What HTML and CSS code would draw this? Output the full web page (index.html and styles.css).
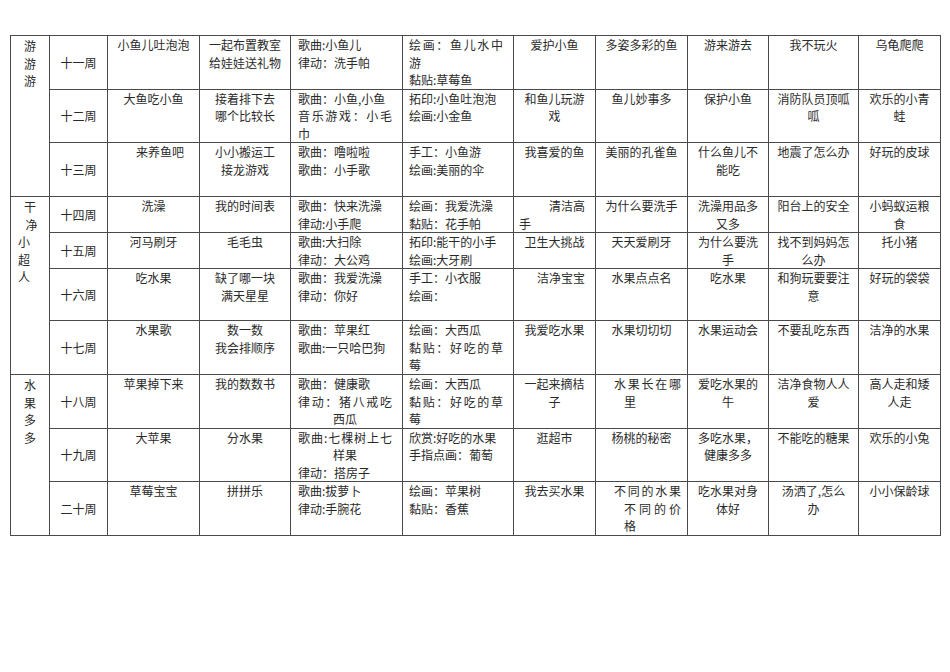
FILE: index.html
```html
<!DOCTYPE html>
<html lang="zh-CN">
<head>
<meta charset="utf-8">
<title>主题活动安排</title>
<link rel="stylesheet" href="styles.css">
</head>
<body>
<div class="page">
<table class="plan">
  <colgroup>
    <col class="w-theme"><col class="w-week"><col class="w-c3"><col class="w-c4"><col class="w-c5"><col class="w-c6">
    <col class="w-c7"><col class="w-c8"><col class="w-c9"><col class="w-c10"><col class="w-c11">
  </colgroup>
  <tbody>
    <tr class="r1">
      <td class="theme" rowspan="3">游<br>游<br>游</td>
      <td class="week">十一周</td>
      <td>小鱼儿吐泡泡</td>
      <td>一起布置教室<br>给娃娃送礼物</td>
      <td class="lt"><div>歌曲:小鱼儿</div><div>律动：洗手帕</div></td>
      <td class="lt c6"><div>绘画：鱼儿水中游</div><div>黏贴:草莓鱼</div></td>
      <td>爱护小鱼</td>
      <td>多姿多彩的鱼</td>
      <td>游来游去</td>
      <td>我不玩火</td>
      <td>乌龟爬爬</td>
    </tr>
    <tr class="r2">
      <td class="week">十二周</td>
      <td>大鱼吃小鱼</td>
      <td>接着排下去<br>哪个比较长</td>
      <td class="lt"><div>歌曲：小鱼,小鱼</div><div>音乐游戏：小毛巾</div></td>
      <td class="lt c6"><div>拓印:小鱼吐泡泡</div><div>绘画:小金鱼</div></td>
      <td>和鱼儿玩游<br>戏</td>
      <td>鱼儿妙事多</td>
      <td>保护小鱼</td>
      <td>消防队员顶呱<br>呱</td>
      <td>欢乐的小青<br>蛙</td>
    </tr>
    <tr class="r3">
      <td class="week">十三周</td>
      <td class="shift">来养鱼吧</td>
      <td>小小搬运工<br>接龙游戏</td>
      <td class="lt"><div>歌曲：噜啦啦</div><div>歌曲：小手歌</div></td>
      <td class="lt c6"><div>手工：小鱼游</div><div>绘画:美丽的伞</div></td>
      <td>我喜爱的鱼</td>
      <td>美丽的孔雀鱼</td>
      <td>什么鱼儿不<br>能吃</td>
      <td>地震了怎么办</td>
      <td>好玩的皮球</td>
    </tr>

    <tr class="r4">
      <td class="theme" rowspan="4"><div class="t-a">干</div><div class="t-b">净</div><div class="t-c">小<br>超<br>人</div></td>
      <td class="week">十四周</td>
      <td>洗澡</td>
      <td>我的时间表</td>
      <td class="lt"><div>歌曲：快来洗澡</div><div>律动:小手爬</div></td>
      <td class="lt c6"><div>绘画：我爱洗澡</div><div>黏贴：花手帕</div></td>
      <td class="lt indent">清洁高<br>手</td>
      <td>为什么要洗手</td>
      <td>洗澡用品多<br>又多</td>
      <td>阳台上的安全</td>
      <td>小蚂蚁运粮<br>食</td>
    </tr>
    <tr class="r5">
      <td class="week">十五周</td>
      <td>河马刷牙</td>
      <td>毛毛虫</td>
      <td class="lt"><div>歌曲:大扫除</div><div>律动：大公鸡</div></td>
      <td class="lt c6"><div>拓印:能干的小手</div><div>绘画:大牙刷</div></td>
      <td>卫生大挑战</td>
      <td>天天爱刷牙</td>
      <td>为什么要洗<br>手</td>
      <td>找不到妈妈怎<br>么办</td>
      <td>托小猪</td>
    </tr>
    <tr class="r6">
      <td class="week">十六周</td>
      <td>吃水果</td>
      <td>缺了哪一块<br>满天星星</td>
      <td class="lt"><div>歌曲：我爱洗澡</div><div>律动：你好</div></td>
      <td class="lt c6"><div>手工：小衣服</div><div>绘画：</div></td>
      <td class="shift">洁净宝宝</td>
      <td>水果点点名</td>
      <td>吃水果</td>
      <td>和狗玩要要注<br>意</td>
      <td>好玩的袋袋</td>
    </tr>
    <tr class="r7">
      <td class="week">十七周</td>
      <td>水果歌</td>
      <td>数一数<br>我会排顺序</td>
      <td class="lt"><div>歌曲：苹果红</div><div>歌曲:一只哈巴狗</div></td>
      <td class="lt c6"><div>绘画：大西瓜</div><div>黏贴：好吃的草莓</div></td>
      <td>我爱吃水果</td>
      <td>水果切切切</td>
      <td>水果运动会</td>
      <td>不要乱吃东西</td>
      <td>洁净的水果</td>
    </tr>

    <tr class="r8">
      <td class="theme" rowspan="3">水<br>果<br>多<br>多</td>
      <td class="week">十八周</td>
      <td>苹果掉下来</td>
      <td>我的数数书</td>
      <td class="lt"><div>歌曲：健康歌</div><div class="jc">律动：猪八戒吃西瓜</div></td>
      <td class="lt c6"><div>绘画：大西瓜</div><div>黏贴：好吃的草莓</div></td>
      <td>一起来摘桔<br>子</td>
      <td class="hang">水果长在哪里</td>
      <td>爱吃水果的<br>牛</td>
      <td>洁净食物人人<br>爱</td>
      <td>高人走和矮<br>人走</td>
    </tr>
    <tr class="r9">
      <td class="week">十九周</td>
      <td>大苹果</td>
      <td>分水果</td>
      <td class="lt"><div class="jc">歌曲:七棵树上七样果</div><div>律动：搭房子</div></td>
      <td class="lt c6"><div>欣赏:好吃的水果</div><div>手指点画：葡萄</div></td>
      <td>逛超市</td>
      <td>杨桃的秘密</td>
      <td>多吃水果，<br>健康多多</td>
      <td>不能吃的糖果</td>
      <td>欢乐的小兔</td>
    </tr>
    <tr class="r10">
      <td class="week">二十周</td>
      <td>草莓宝宝</td>
      <td>拼拼乐</td>
      <td class="lt"><div>歌曲:拔萝卜</div><div>律动:手腕花</div></td>
      <td class="lt c6"><div>绘画：苹果树</div><div>黏贴：香蕉</div></td>
      <td>我去买水果</td>
      <td class="hang">不同的水果不同的价格</td>
      <td>吃水果对身<br>体好</td>
      <td>汤洒了,怎么<br>办</td>
      <td>小小保龄球</td>
    </tr>
  </tbody>
</table>
</div>
</body>
</html>
```

FILE: styles.css
```css
html, body {
  margin: 0;
  padding: 0;
  background: #ffffff;
}

body {
  font-family: "Noto Sans CJK SC", "Liberation Serif", serif;
  font-size: 12px;
  color: #2a2a2a;
}

.page {
  padding: 35px 0 0 10px;
}

.plan {
  border-collapse: collapse;
  table-layout: fixed;
  width: 931px;
}

.w-theme { width: 39px; }
.w-week { width: 58px; }
.w-c3 { width: 92px; }
.w-c4 { width: 91px; }
.w-c5 { width: 112px; }
.w-c6 { width: 111px; }
.w-c7 { width: 82px; }
.w-c8 { width: 92px; }
.w-c9 { width: 81px; }
.w-c10 { width: 90px; }
.w-c11 { width: 82px; }

.plan td {
  border: 1px solid #4a4a4a;
  padding: 0 3px;
  line-height: 17.5px;
  vertical-align: top;
  text-align: center;
  overflow: hidden;
}

.r1 { height: 52px; }
.r2 { height: 53px; }
.r3 { height: 54px; }
.r4 { height: 35px; }
.r5 { height: 36px; }
.r6 { height: 52px; }
.r7 { height: 54px; }
.r8 { height: 53px; }
.r9 { height: 53px; }
.r10 { height: 52px; }

.plan td.week {
  vertical-align: middle;
}

.plan td.theme {
  padding-top: 1px;
}

.t-a { text-align: center; }
.t-b { text-align: center; padding-left: 3px; }
.t-c { text-align: left; padding-left: 4px; }

.plan td.lt {
  text-align: justify;
  padding-left: 7px;
  padding-right: 10px;
}

.plan td.c6 {
  padding-left: 6px;
  padding-right: 10px;
}

.jc {
  text-align: justify;
  text-align-last: center;
}

.plan td.shift {
  text-indent: 13px;
}

.plan td.indent {
  text-align: left;
  padding-left: 5px;
  text-indent: 30px;
}

.plan td.hang {
  text-align: justify;
  padding-left: 28px;
  padding-right: 6px;
  text-indent: -10px;
}
```
